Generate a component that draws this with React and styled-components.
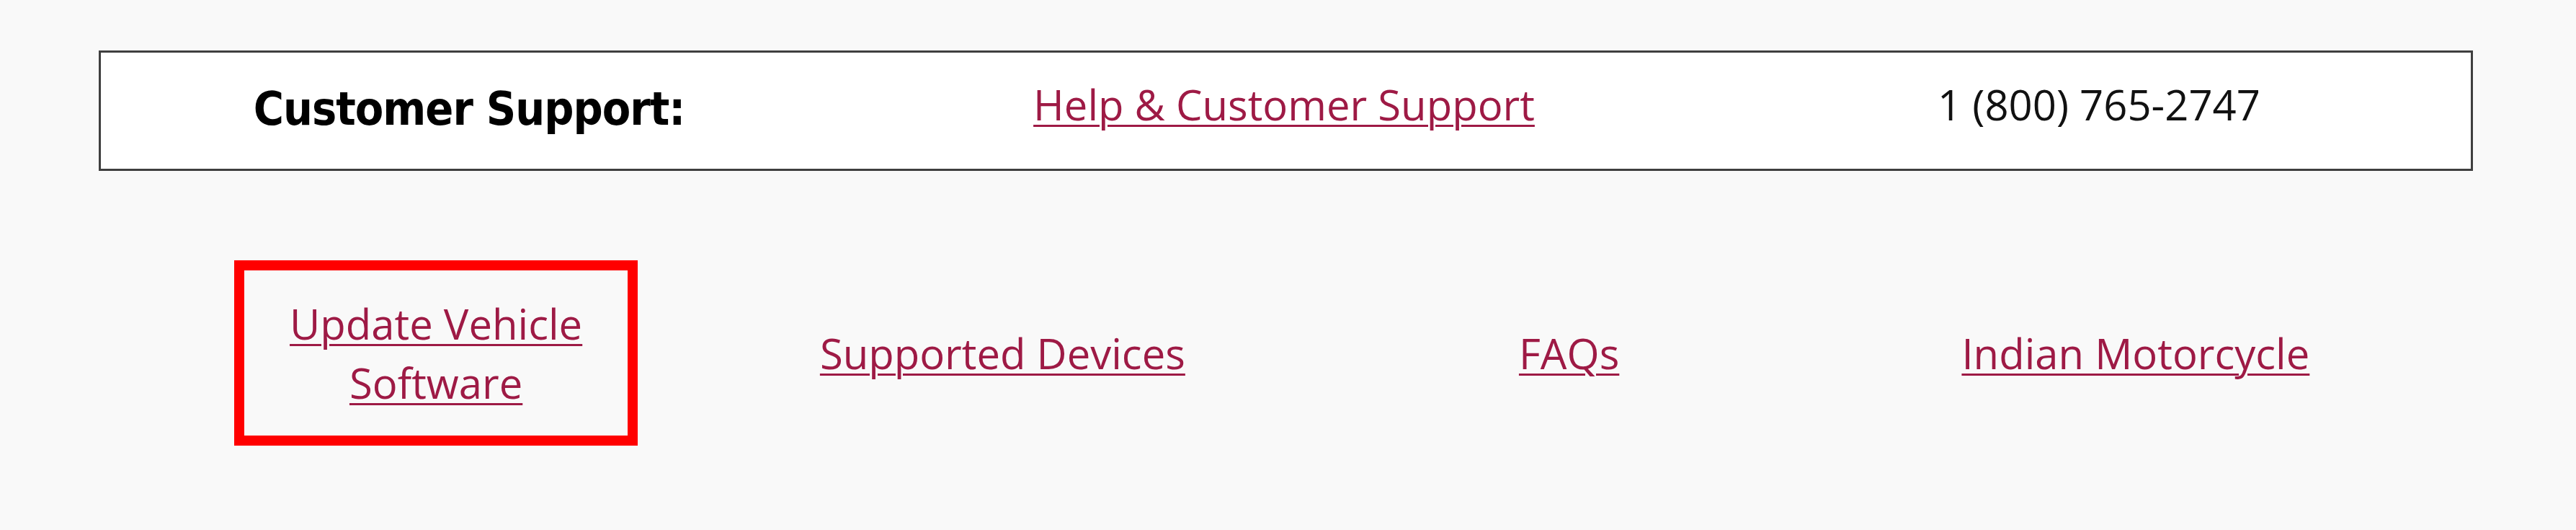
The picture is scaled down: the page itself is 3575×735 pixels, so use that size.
import React from "react";
import styled, { createGlobalStyle } from "styled-components";

const GlobalStyle = createGlobalStyle`
  html, body {
    margin: 0;
    padding: 0;
    background: #f9f9f9;
  }
  body {
    font-family: "Open Sans", "Liberation Sans", sans-serif;
  }
`;

const Page = styled.div`
  padding: 70px 143px 0 137px;
  height: 735px;
  box-sizing: border-box;
`;

const SupportBar = styled.section`
  height: 167px;
  box-sizing: border-box;
  border: 3px solid #3f3f3f;
  background: #ffffff;
  display: grid;
  grid-template-columns: repeat(3, 1fr);
  column-gap: 131px;
  padding: 0 16px 18px 11px;
  align-items: center;
  justify-items: center;
`;

const SupportTitle = styled.h2`
  margin: 12px 0 0;
  font-family: "Liberation Sans Narrow", "DejaVu Sans Condensed", "Liberation Sans", sans-serif;
  font-weight: 700;
  font-size: 64px;
  letter-spacing: -1px;
  color: #000;
  line-height: 1;
`;

const Link = styled.a`
  font-family: "Open Sans", "Liberation Sans", sans-serif;
  font-size: 58px;
  line-height: 82px;
  color: #9e1a45;
  text-decoration: underline;
  text-decoration-thickness: 3px;
  text-underline-offset: 6px;
  text-align: center;
  cursor: pointer;
`;

const Phone = styled.span`
  font-family: "Open Sans", "Liberation Sans", sans-serif;
  font-size: 58px;
  line-height: 82px;
  color: #111;
`;

const LinksRow = styled.nav`
  margin-top: 124px;
  display: grid;
  grid-template-columns: repeat(4, 1fr);
  padding: 0 75px;
  align-items: center;
  justify-items: center;
`;

const Highlight = styled.div`
  width: 560px;
  height: 257px;
  box-sizing: border-box;
  border: 14px solid #ff0000;
  display: flex;
  align-items: center;
  justify-content: center;
  text-align: center;
`;

export default function App() {
  return (
    <>
      <GlobalStyle />
      <Page>
        <SupportBar>
          <SupportTitle>Customer Support:</SupportTitle>
          <Link>Help &amp; Customer Support</Link>
          <Phone>1 (800) 765-2747</Phone>
        </SupportBar>
        <LinksRow>
          <Highlight>
            <Link>Update Vehicle Software</Link>
          </Highlight>
          <Link>Supported Devices</Link>
          <Link>FAQs</Link>
          <Link>Indian Motorcycle</Link>
        </LinksRow>
      </Page>
    </>
  );
}
